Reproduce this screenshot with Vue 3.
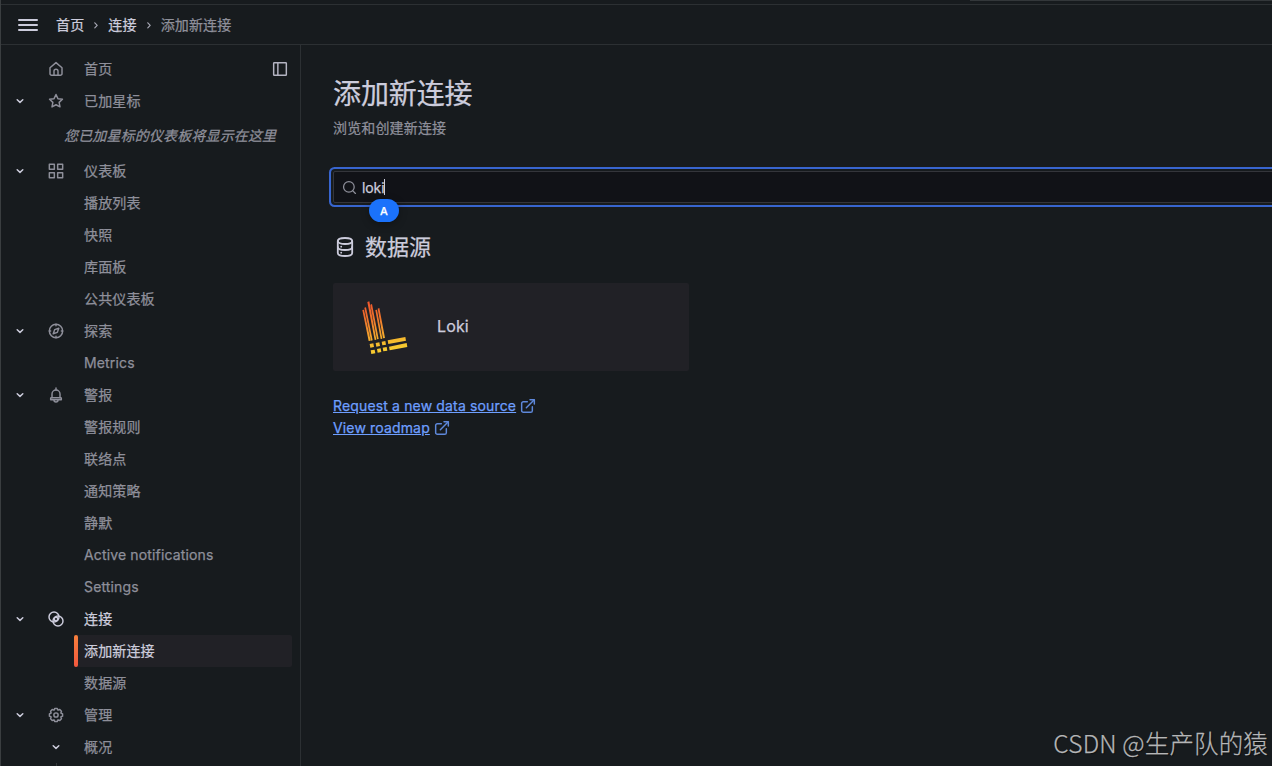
<template>
  <div class="page">
    <div class="strip"><span class="strip-line"></span></div>
    <header class="topbar">
      <button class="menu-btn" aria-label="menu">
        <span></span><span></span><span></span>
      </button>
      <nav class="crumbs">
        <template v-for="(crumb, i) in crumbs" :key="crumb">
          <svg v-if="i > 0" class="sep" viewBox="0 0 16 16"><path d="M6.800 5.800 9.200 8.300l-2.400 2.500" /></svg>
          <span :class="{ current: i === crumbs.length - 1 }">{{ crumb }}</span>
        </template>
      </nav>
    </header>

    <div class="body">
      <aside class="sidebar">
        <template v-for="item in menu" :key="item.text + item.type">
          <p v-if="item.type === 'note'" class="note">{{ item.text }}</p>
          <div v-else class="row" :class="item.type">
            <span class="toggle">
              <svg v-if="item.open" class="chevron" viewBox="0 0 16 16"><path d="m5.2 6.8 2.8 2.6 2.8-2.6" /></svg>
            </span>
            <span class="icon-cell">
              <svg v-if="item.icon" class="icon" viewBox="0 0 24 24"><path v-for="d in icons[item.icon]" :key="d" :d="d" /></svg>
              <svg v-if="item.type === 'nested'" class="chevron" viewBox="0 0 16 16"><path d="m5.2 6.8 2.8 2.6 2.8-2.6" /></svg>
            </span>
            <a class="label" :class="{ bright: item.bright }">{{ item.text }}</a>
            <svg v-if="item.dock" class="icon dock" viewBox="0 0 24 24"><path v-for="d in icons.dock" :key="d" :d="d" /></svg>
          </div>
        </template>
        <span class="tree-line"></span>
      </aside>

      <main class="content">
        <h1>添加新连接</h1>
        <p class="subtitle">浏览和创建新连接</p>

        <div class="search">
          <svg class="icon search-icon" viewBox="0 0 24 24"><path v-for="d in icons.search" :key="d" :d="d" /></svg>
          <span class="query">{{ query }}</span><span class="caret"></span>
          <span class="ime">A</span>
        </div>

        <h2>
          <svg class="db" viewBox="0 0 24 24"><path v-for="d in icons.database" :key="d" :d="d" /></svg>
          数据源
        </h2>

        <div class="card">
          <svg class="logo" viewBox="0 6 210 210">
            <defs>
              <linearGradient id="loki" gradientUnits="userSpaceOnUse" x1="58" y1="32" x2="88" y2="192">
                <stop offset="0" stop-color="#f0542c" />
                <stop offset="0.35" stop-color="#f0762c" />
                <stop offset="0.75" stop-color="#f5b32d" />
                <stop offset="1" stop-color="#f8d030" />
              </linearGradient>
            </defs>
            <g fill="url(#loki)">
              <path d="M37 60 42 59 62 152 56 153ZM43 53 48 52 68 151 63 152Z" />
              <path d="M52 36 58 34 79 149 74 150ZM61 44 66 42 86 147 81 148Z" />
              <path d="M76 60 81 59 97 146 92 147ZM83 56 88 54 105 144 99 145Z" />
              <path d="M59 162 70 160 72 171 61 173ZM77 159 88 157 90 168 79 170ZM95 155 106 153 108 164 97 166Z" />
              <path d="M62 181 74 179 76 190 64 192ZM81 177 92 175 94 186 83 188ZM98 173 110 171 112 182 100 184Z" />
              <path d="M113 151 166 141 168 152 115 162ZM117 170 170 159 172 171 119 181Z" />
            </g>
          </svg>
          <span class="card-name">Loki</span>
        </div>

        <div class="links">
          <a v-for="link in links" :key="link">
            <span>{{ link }}</span>
            <svg class="icon" viewBox="0 0 24 24"><path v-for="d in icons.external" :key="d" :d="d" /></svg>
          </a>
        </div>
      </main>
    </div>

    <div class="watermark">CSDN @生产队的猿</div>
  </div>
</template>

<script setup>
import { ref } from 'vue';

const query = ref('loki');
const crumbs = ['首页', '连接', '添加新连接'];
const links = ['Request a new data source', 'View roadmap'];

const menu = [
  { type: 'top', text: '首页', icon: 'home', dock: true },
  { type: 'top', text: '已加星标', icon: 'star', open: true },
  { type: 'note', text: '您已加星标的仪表板将显示在这里' },
  { type: 'top', text: '仪表板', icon: 'apps', open: true },
  { type: 'sub', text: '播放列表' },
  { type: 'sub', text: '快照' },
  { type: 'sub', text: '库面板' },
  { type: 'sub', text: '公共仪表板' },
  { type: 'top', text: '探索', icon: 'compass', open: true },
  { type: 'sub', text: 'Metrics' },
  { type: 'top', text: '警报', icon: 'bell', open: true },
  { type: 'sub', text: '警报规则' },
  { type: 'sub', text: '联络点' },
  { type: 'sub', text: '通知策略' },
  { type: 'sub', text: '静默' },
  { type: 'sub', text: 'Active notifications' },
  { type: 'sub', text: 'Settings' },
  { type: 'top lit', text: '连接', icon: 'connections', open: true, bright: true },
  { type: 'sub active', text: '添加新连接', bright: true },
  { type: 'sub', text: '数据源' },
  { type: 'top', text: '管理', icon: 'cog', open: true },
  { type: 'nested', text: '概况' },
];

// 24x24 stroke icons
const icons = {
  home: ['M3 10.2 12 2.4l9 7.8V19a2.5 2.5 0 0 1-2.5 2.5h-13A2.5 2.5 0 0 1 3 19Z', 'M9 21v-5.500a3 3 0 0 1 6 0V21'],
  star: ['m12 2.300 2.900 6.200 6.800.900-5 4.700 1.300 6.700L12 17.600l-6 3.200 1.300-6.700-5-4.700 6.800-.900Z'],
  apps: ['M2 2h7.500v7.500H2Z', 'M14.500 2H22v7.500h-7.500Z', 'M2 14.500h7.500V22H2Z', 'M14.500 14.500H22V22h-7.500Z'],
  compass: ['M12 2a10 10 0 1 0 0 20 10 10 0 0 0 0-20Z', 'M16.200 7.800 14 14l-6.200 2.200L10 10Z', 'M12 2v2M12 20v2M2 12h2M20 12h2'],
  bell: ['M12 1.500v3', 'M6 16v-5.500a6 6 0 0 1 12 0V16', 'M5 16h14a1 1 0 0 1 1 1v2H4v-2a1 1 0 0 1 1-1Z', 'M9 19.500a3 3 0 0 0 6 0'],
  connections: ['M9 1.500a7.500 7.500 0 1 0 0 15 7.500 7.500 0 0 0 0-15Z', 'M15 7.500a7.500 7.500 0 1 0 0 15 7.500 7.500 0 0 0 0-15Z', 'M12 9.300a2.700 2.700 0 1 0 0 5.400 2.700 2.700 0 0 0 0-5.400Z'],
  cog: ['M10.26 2.150h3.480l1.280 2.550 2.710-.890 2.460 2.460-.890 2.710 2.550 1.280v3.480l-2.550 1.280.890 2.710-2.460 2.460-2.710-.890-1.280 2.550h-3.480l-1.280-2.550-2.710.890-2.460-2.460.890-2.710-2.550-1.280v-3.480l2.550-1.280-.890-2.710 2.460-2.460 2.710.890Z', 'M12 8.800a3.200 3.200 0 1 0 0 6.400 3.200 3.200 0 0 0 0-6.400Z'],
  dock: ['M3.500 2.500h17a1 1 0 0 1 1 1v17a1 1 0 0 1-1 1h-17a1 1 0 0 1-1-1v-17a1 1 0 0 1 1-1Z', 'M8.800 3v18'],
  search: ['M11 2.500a8.500 8.500 0 1 0 0 17 8.500 8.500 0 0 0 0-17Z', 'm17 17 4.500 4.500'],
  database: ['M4.800 6c0-1.800 3.200-3 7.200-3s7.200 1.200 7.200 3-3.200 3-7.200 3-7.200-1.200-7.200-3Z', 'M4.800 6v12c0 1.800 3.200 3 7.200 3s7.200-1.200 7.200-3V6', 'M4.800 12c0 1.800 3.200 3 7.200 3s7.200-1.200 7.200-3', 'M8.200 11.600v.1M8.200 17.600v.1'],
  external: ['M11 5.500H5a2.500 2.500 0 0 0-2.500 2.500v11A2.500 2.500 0 0 0 5 21.500h11a2.500 2.500 0 0 0 2.500-2.500v-6', 'M15 2.500h6.500V9', 'M21 3 9.500 14.500'],
};
</script>

<style>
body {
  background: #171b1e;
}
</style>

<style scoped>
.page {
  position: relative;
  box-sizing: border-box;
  width: 1272px;
  height: 766px;
  overflow: hidden;
  display: flex;
  flex-direction: column;
  border-left: 1px solid #3a3e40;
  background: #171b1e;
  color: #ccccdc;
  font-family: Inter, "Noto Sans CJK SC", sans-serif;
  font-size: 14px;
  line-height: 22px;
  letter-spacing: 0.15px;
  -webkit-text-stroke: 0.25px;
}

h1,
h2,
p {
  margin: 0;
  font-weight: 400;
}

svg {
  flex: none;
  fill: none;
  stroke: currentColor;
  stroke-width: 2;
  stroke-linecap: round;
  stroke-linejoin: round;
}

.icon {
  width: 16px;
  height: 16px;
  stroke-width: 2.2;
}

/* top bar */
.strip {
  height: 4px;
  flex: none;
  display: flex;
  justify-content: flex-end;
  border-bottom: 1px solid #2c3033;
}

.strip-line {
  width: 302px;
  height: 1px;
  background: #33373a;
}

.topbar {
  height: 39px;
  flex: none;
  display: flex;
  align-items: center;
  padding-left: 17px;
  border-bottom: 1px solid #2c3033;
}

.menu-btn {
  display: flex;
  flex-direction: column;
  gap: 3px;
  width: 20px;
  padding: 0;
  border: 0;
  background: none;
}

.menu-btn span {
  height: 2px;
  border-radius: 1px;
  background: #ccccdc;
}

.crumbs {
  display: flex;
  align-items: center;
  margin-left: 18px;
}

.crumbs .sep {
  width: 16px;
  height: 16px;
  margin: 0 4px;
  stroke-width: 1.2;
  color: #a6a7b3;
}

.crumbs .current {
  color: #8e8f9a;
}

.body {
  flex: 1;
  min-height: 0;
  display: flex;
}

/* sidebar */
.sidebar {
  box-sizing: border-box;
  width: 300px;
  flex: none;
  overflow: hidden;
  padding: 8px 8px 0 7px;
  border-right: 1px solid #2c3033;
}

.row {
  display: flex;
  align-items: center;
  height: 32px;
  color: #8e8f9a;
}

.toggle {
  width: 24px;
  height: 16px;
  display: flex;
  justify-content: center;
}

.icon-cell {
  width: 48px;
  height: 16px;
  display: flex;
  justify-content: center;
}

.chevron {
  width: 16px;
  height: 16px;
  color: #ccccdc;
  stroke-width: 1.5;
}

.label {
  flex: 1;
  align-self: stretch;
  padding-left: 4px;
  line-height: 32px;
}

.lit,
.label.bright {
  color: #ccccdc;
}

.active .label {
  position: relative;
  margin-left: -6px;
  padding-left: 10px;
  border-radius: 2px;
  background: #212126;
}

.active .label::before {
  content: "";
  position: absolute;
  left: 0;
  top: 0;
  width: 4px;
  height: 32px;
  border-radius: 2px;
  background: linear-gradient(#f8803c, #f2583e);
}

.dock {
  margin-right: 4px;
  color: #b4b4c2;
}

.note {
  height: 38px;
  line-height: 38px;
  padding-left: 56px;
  font-style: italic;
  color: #8e8f9a;
  white-space: nowrap;
}

.tree-line {
  display: block;
  width: 1px;
  height: 4px;
  margin-left: 48px;
  background: #33373a;
}

/* content */
.content {
  flex: none;
  width: 1000px;
  padding: 33px 0 0 32px;
}

h1 {
  font-size: 28px;
  line-height: 32px;
  letter-spacing: -0.1px;
}

.subtitle {
  margin-top: 7px;
  color: #8e8f9a;
}

.search {
  position: relative;
  box-sizing: border-box;
  height: 32px;
  margin-top: 32px;
  display: flex;
  align-items: center;
  padding-left: 8px;
  border: 1px solid #34353b;
  border-radius: 2px;
  background: #111217;
  box-shadow: 0 0 0 2px #171b1e, 0 0 0 4px #3865cf;
}

.search-icon {
  width: 15px;
  height: 15px;
  color: #8e8f9a;
  stroke-width: 2;
}

.query {
  margin-left: 5px;
  padding-top: 1px;
  letter-spacing: -0.1px;
}

.caret {
  width: 1px;
  height: 16px;
  background: #ccccdc;
}

.ime {
  position: absolute;
  left: 35px;
  top: 27px;
  width: 30px;
  height: 23px;
  border-radius: 12px;
  background: #1b72fb;
  box-shadow: 0 2px 8px rgba(0, 0, 0, 0.3);
  color: #fff;
  font-size: 11px;
  font-weight: 500;
  line-height: 25px;
  text-align: center;
}

h2 {
  display: flex;
  align-items: center;
  gap: 8px;
  height: 32px;
  margin-top: 28px;
  font-size: 22px;
  letter-spacing: 0;
}

.db {
  width: 24px;
  height: 24px;
  stroke-width: 1.8;
}

.card {
  box-sizing: border-box;
  display: flex;
  align-items: center;
  gap: 17px;
  width: 356px;
  height: 88px;
  margin-top: 20px;
  padding-left: 17px;
  border-radius: 2px;
  background: #212126;
  font-size: 16px;
}

.card-name {
  padding-bottom: 2px;
}

.logo {
  width: 70px;
  height: 70px;
  stroke: none;
}

.links {
  margin-top: 24px;
  display: flex;
  flex-direction: column;
}

.links a {
  display: flex;
  align-items: center;
  gap: 4px;
  height: 22px;
  color: #6e9fff;
}

.links span {
  text-decoration: underline;
}

.links .icon {
  color: #5e88da;
}

.watermark {
  position: absolute;
  right: 4px;
  bottom: 5px;
  font-family: "Noto Sans CJK SC", sans-serif;
  font-size: 24.5px;
  font-weight: 300;
  line-height: 36px;
  color: #b5b6b7;
  text-shadow: 1px 1px 1px rgba(0, 0, 0, 0.5);
}
</style>
